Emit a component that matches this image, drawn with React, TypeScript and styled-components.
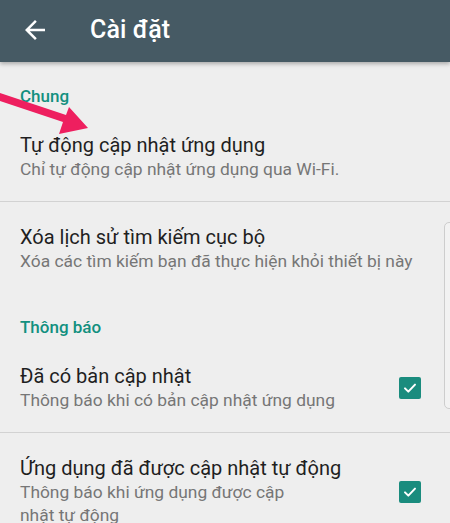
import React from 'react'
import styled, { createGlobalStyle } from 'styled-components'

const GlobalStyle = createGlobalStyle`
  html, body {
    margin: 0;
    padding: 0;
    background: #eeeeee;
  }
  body {
    font-family: Roboto, "Noto Sans", "Liberation Sans", sans-serif;
    -webkit-font-smoothing: antialiased;
  }
`

type Pref = {
  title: string
  summary: React.ReactNode
  checked?: boolean
}

type Section = {
  name: string
  items: Pref[]
  divided?: boolean
}

const sections: Section[] = [
  {
    name: 'Chung',
    divided: true,
    items: [
      { title: 'Tự động cập nhật ứng dụng', summary: 'Chỉ tự động cập nhật ứng dụng qua Wi-Fi.' },
      { title: 'Xóa lịch sử tìm kiếm cục bộ', summary: 'Xóa các tìm kiếm bạn đã thực hiện khỏi thiết bị này' },
    ],
  },
  {
    name: 'Thông báo',
    divided: true,
    items: [
      { title: 'Đã có bản cập nhật', summary: 'Thông báo khi có bản cập nhật ứng dụng', checked: true },
      {
        title: 'Ứng dụng đã được cập nhật tự động',
        summary: (
          <>
            Thông báo khi ứng dụng được cập
            <br />
            nhật tự động
          </>
        ),
        checked: true,
      },
    ],
  },
]

const App = () => {
  return (
    <>
      <GlobalStyle />
      <SScreen>
        <SToolbar>
          <SBackButton aria-label="Quay lại">
            <svg width="30" height="30" viewBox="0 0 24 24" fill="#ffffff">
              <path d="M20 11H7.83l5.59-5.59L12 4l-8 8 8 8 1.41-1.41L7.83 13H20v-2z" />
            </svg>
          </SBackButton>
          <STitle>Cài đặt</STitle>
        </SToolbar>

        <SList>
          {sections.map((section, si) => (
            <div key={section.name}>
              <SCategory $first={si === 0}>{section.name}</SCategory>
              {section.items.map((item, i) => (
                <SRow key={item.title} $divider={section.divided && i === 0}>
                  <STexts>
                    <SRowTitle>{item.title}</SRowTitle>
                    <SRowSummary>{item.summary}</SRowSummary>
                  </STexts>
                  {item.checked && (
                    <SCheckbox>
                      <svg width="16" height="16" viewBox="0 0 24 24">
                        <path
                          d="M4.5 12.5l5 5L19.5 7"
                          fill="none"
                          stroke="#ffffff"
                          strokeWidth="3"
                          strokeLinecap="round"
                          strokeLinejoin="round"
                        />
                      </svg>
                    </SCheckbox>
                  )}
                </SRow>
              ))}
            </div>
          ))}
        </SList>

        {/* mũi tên chú thích màu hồng */}
        <SPointer width="95" height="140" viewBox="0 0 95 140">
          <polygon points="0,93 66,115 69,107 88,128 59,134 63,122 0,101" fill="#ee1f5f" />
        </SPointer>

        {/* mép của một cửa sổ nổi phía phải */}
        <SSideCard />
      </SScreen>
    </>
  )
}

const SScreen = styled.div`
  position: relative;
  width: 450px;
  height: 523px;
  overflow: hidden;
  background: #eeeeee;
`

const SToolbar = styled.header`
  position: relative;
  z-index: 2;
  height: 62px;
  display: flex;
  align-items: center;
  padding: 0 0 3px 0;
  box-sizing: border-box;
  background: #465a64;
  box-shadow: 0 2px 4px rgba(0, 0, 0, 0.28);
`

const SBackButton = styled.button`
  display: flex;
  align-items: center;
  justify-content: center;
  width: 30px;
  height: 30px;
  margin-left: 20px;
  padding: 0;
  border: none;
  background: transparent;
`

const STitle = styled.h1`
  margin: 0 0 0 40px;
  font-size: 25px;
  font-weight: 500;
  color: #ffffff;
  letter-spacing: 0.1px;
`

const SList = styled.main`
  display: flex;
  flex-direction: column;
`

const SCategory = styled.div<{ $first?: boolean }>`
  padding: ${(p) => (p.$first ? '24px' : '24px')} 20px 4px 20px;
  font-size: 17px;
  line-height: 20px;
  font-weight: 500;
  color: #12907f;
`

const SRow = styled.div<{ $divider?: boolean }>`
  display: flex;
  align-items: center;
  padding: 23px 29px 20px 20px;
  border-bottom: ${(p) => (p.$divider ? '1px solid #d2d2d2' : 'none')};
`

const STexts = styled.div`
  flex: 1;
  display: flex;
  flex-direction: column;
  gap: 1px;
`

const SRowTitle = styled.div`
  font-size: 20px;
  line-height: 24px;
  color: #1f1f1f;
`

const SRowSummary = styled.div`
  font-size: 17.4px;
  line-height: 23px;
  color: #767676;
`

const SCheckbox = styled.span`
  display: flex;
  align-items: center;
  justify-content: center;
  flex: none;
  width: 22px;
  height: 22px;
  margin-left: 16px;
  border-radius: 2px;
  background: #1a8c7e;
`

const SPointer = styled.svg`
  position: absolute;
  left: 0;
  top: 0;
  z-index: 3;
`

const SSideCard = styled.div`
  position: absolute;
  left: 444px;
  top: 222px;
  width: 24px;
  height: 185px;
  border: 1px solid #cdcdcd;
  border-radius: 5px;
  background: #f2f2f2;
`

export default App
